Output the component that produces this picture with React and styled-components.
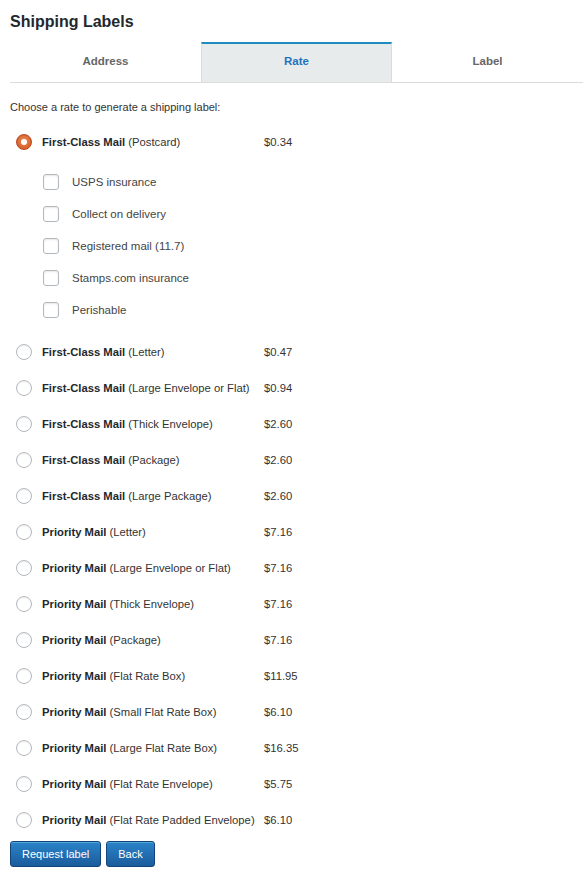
import styled, { createGlobalStyle } from "styled-components";

const Global = createGlobalStyle`
    body {
        margin: 0;
        padding: 0 0 0 10px;
        background: #fff;
        font-family: "Liberation Sans", Arial, sans-serif;
        color: #333;
    }
`;

const Title = styled.h2`
    margin: 12px 0 0;
    font-size: 16px;
    line-height: 20px;
    font-weight: bold;
    color: #23282d;
`;

const Tabs = styled.div`
    display: flex;
    margin-top: 10px;
    border-bottom: 1px solid #dcdcdc;
`;

const Tab = styled.div`
    flex: 1;
    height: 40px;
    display: flex;
    align-items: center;
    justify-content: center;
    padding-bottom: 4px;
    box-sizing: border-box;
    font-size: 11.5px;
    font-weight: bold;
    color: ${p => (p.$active ? "#1e73be" : "#666")};
    background: ${p => (p.$active ? "#e8ebeb" : "transparent")};
    border-top: 2px solid ${p => (p.$active ? "#1e8cbe" : "transparent")};
    border-left: 1px solid ${p => (p.$active ? "#dcdcdc" : "transparent")};
    border-right: 1px solid ${p => (p.$active ? "#dcdcdc" : "transparent")};
`;

const Prompt = styled.p`
    margin: 17px 0 10px;
    font-size: 11px;
    line-height: 14px;
    color: #333;
`;

const RateRow = styled.label`
    display: flex;
    align-items: center;
    height: 36px;
    font-size: 11.25px;
    color: #333;
`;

const Radio = styled.span`
    box-sizing: border-box;
    width: 16px;
    height: 16px;
    margin-left: 6px;
    margin-right: 10px;
    border-radius: 50%;
    flex: none;
    display: flex;
    align-items: center;
    justify-content: center;
    border: 1px solid ${p => (p.$checked ? "#b8461c" : "#b4b9be")};
    background: ${p =>
        p.$checked
            ? "radial-gradient(circle at 50% 40%, #ee8a55, #d2531f)"
            : "#fff"};
    box-shadow: inset 0 1px 2px rgba(0, 0, 0, 0.07);

    &::after {
        content: "";
        display: ${p => (p.$checked ? "block" : "none")};
        width: 6px;
        height: 6px;
        border-radius: 50%;
        background: #fff;
    }
`;

const Name = styled.span`
    width: 222px;
    flex: none;
    b {
        font-weight: bold;
        color: #23282d;
    }
`;

const Price = styled.span`
    color: #333;
`;

const Options = styled.div`
    padding: 6px 0 8px;
`;

const OptionRow = styled.label`
    display: flex;
    align-items: center;
    height: 32px;
    font-size: 11.5px;
    color: #444;
`;

const Check = styled.span`
    box-sizing: border-box;
    width: 16px;
    height: 16px;
    margin-left: 33px;
    margin-right: 13px;
    border: 1px solid #b4b9be;
    border-radius: 3px;
    background: #fff;
    box-shadow: inset 0 1px 2px rgba(0, 0, 0, 0.1);
    flex: none;
`;

const Actions = styled.div`
    display: flex;
    gap: 5px;
    margin-top: 3px;
`;

const Button = styled.button`
    height: 26px;
    padding: 0 11px;
    font-family: "Liberation Sans", Arial, sans-serif;
    font-size: 11px;
    color: #fff;
    border: 1px solid #12457a;
    border-radius: 3px;
    background: linear-gradient(#2b83c9, #1a5c9c);
    box-shadow: inset 0 1px 0 rgba(120, 200, 230, 0.5);
    cursor: pointer;
`;

const rates = [
    ["First-Class Mail", "Letter", "$0.47"],
    ["First-Class Mail", "Large Envelope or Flat", "$0.94"],
    ["First-Class Mail", "Thick Envelope", "$2.60"],
    ["First-Class Mail", "Package", "$2.60"],
    ["First-Class Mail", "Large Package", "$2.60"],
    ["Priority Mail", "Letter", "$7.16"],
    ["Priority Mail", "Large Envelope or Flat", "$7.16"],
    ["Priority Mail", "Thick Envelope", "$7.16"],
    ["Priority Mail", "Package", "$7.16"],
    ["Priority Mail", "Flat Rate Box", "$11.95"],
    ["Priority Mail", "Small Flat Rate Box", "$6.10"],
    ["Priority Mail", "Large Flat Rate Box", "$16.35"],
    ["Priority Mail", "Flat Rate Envelope", "$5.75"],
    ["Priority Mail", "Flat Rate Padded Envelope", "$6.10"],
];

const extras = [
    "USPS insurance",
    "Collect on delivery",
    "Registered mail (11.7)",
    "Stamps.com insurance",
    "Perishable",
];

function Rate({ service, kind, price, checked }) {
    return (
        <RateRow>
            <Radio $checked={checked} />
            <Name>
                <b>{service}</b> ({kind})
            </Name>
            <Price>{price}</Price>
        </RateRow>
    );
}

export default function App() {
    return (
        <>
            <Global />
            <Title>Shipping Labels</Title>
            <Tabs>
                <Tab>Address</Tab>
                <Tab $active>Rate</Tab>
                <Tab>Label</Tab>
            </Tabs>
            <Prompt>Choose a rate to generate a shipping label:</Prompt>
            <Rate service="First-Class Mail" kind="Postcard" price="$0.34" checked />
            <Options>
                {extras.map(e => (
                    <OptionRow key={e}>
                        <Check />
                        {e}
                    </OptionRow>
                ))}
            </Options>
            {rates.map(([s, k, p]) => (
                <Rate key={s + k} service={s} kind={k} price={p} />
            ))}
            <Actions>
                <Button>Request label</Button>
                <Button>Back</Button>
            </Actions>
        </>
    );
}
